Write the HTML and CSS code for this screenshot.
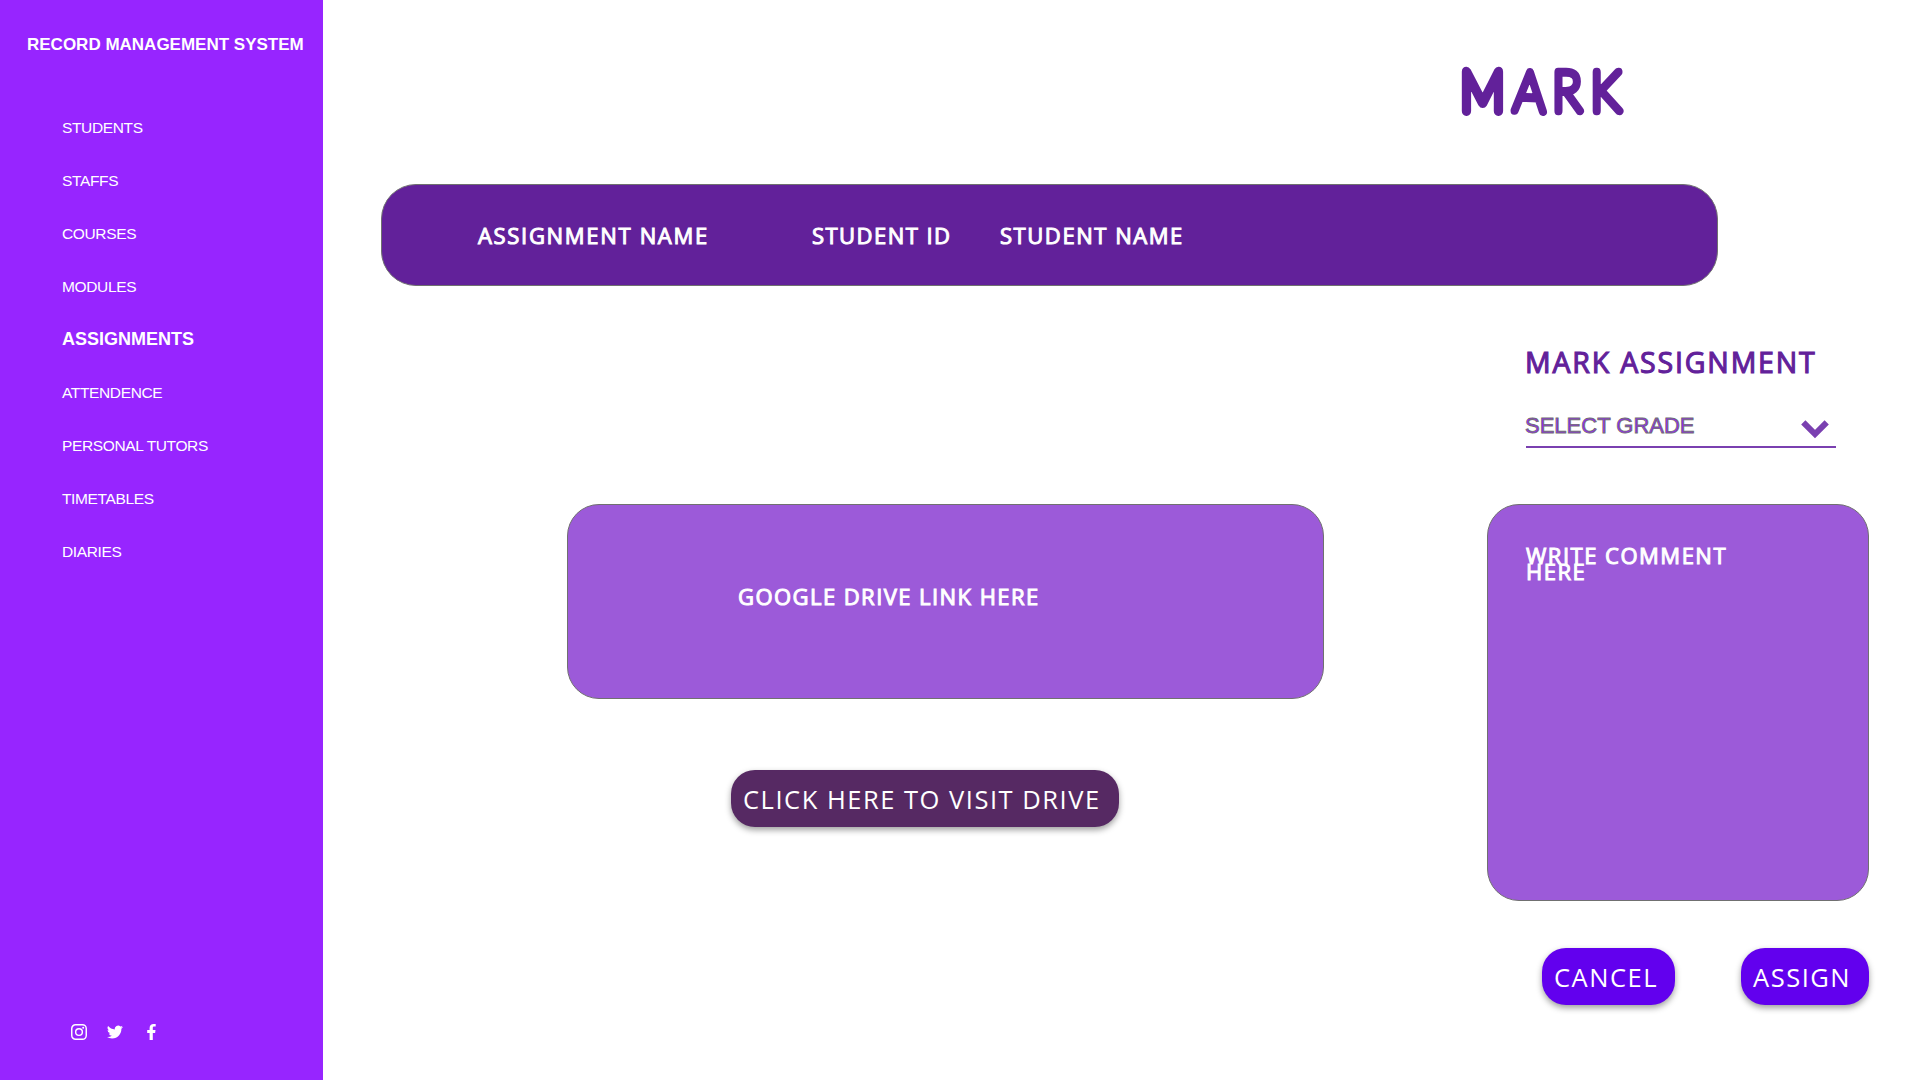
FILE: index.html
```html
<!DOCTYPE html>
<html lang="en">
<head>
<meta charset="utf-8">
<title>Record Management System</title>
<link rel="stylesheet" href="styles.css">
</head>
<body>
<div class="app">
  <aside class="sidebar">
    <h2 class="brand">RECORD MANAGEMENT SYSTEM</h2>
    <nav class="nav">
      <a>STUDENTS</a>
      <a>STAFFS</a>
      <a>COURSES</a>
      <a>MODULES</a>
      <a class="active">ASSIGNMENTS</a>
      <a>ATTENDENCE</a>
      <a>PERSONAL TUTORS</a>
      <a>TIMETABLES</a>
      <a>DIARIES</a>
    </nav>
    <div class="social">
      <svg width="16" height="16" viewBox="0 0 16 16" fill="none" stroke="#fff" stroke-width="1.45"><rect x=".75" y=".75" width="14.5" height="14.5" rx="3.8"/><circle cx="8" cy="8" r="3.35"/><circle cx="12.2" cy="3.8" r="1" fill="#fff" stroke="none"/></svg>
      <svg width="16" height="16" viewBox="0 0 24 24" fill="#fff"><path d="M23.95 4.57a10 10 0 0 1-2.82.77 4.96 4.96 0 0 0 2.16-2.72c-.95.55-2 .95-3.13 1.18a4.92 4.92 0 0 0-8.38 4.48C7.69 8.1 4.07 6.13 1.64 3.16a4.92 4.92 0 0 0 1.52 6.57 4.9 4.9 0 0 1-2.23-.61v.06a4.92 4.92 0 0 0 3.95 4.83 5 5 0 0 1-2.21.08 4.94 4.94 0 0 0 4.6 3.42A9.87 9.87 0 0 1 0 19.54a13.99 13.99 0 0 0 7.55 2.21c9.05 0 14-7.5 14-13.98 0-.21 0-.42-.02-.63a9.94 9.94 0 0 0 2.42-2.57z"/></svg>
      <svg class="facebook" width="9" height="16" viewBox="0 0 9 16" fill="#fff"><path d="M2.6 16V9H.2V6.1h2.4V4C2.600 1.400 4.200 0 6.600 0L8.700.1v2.500H7.200C6 2.600 5.800 3.200 5.800 4v2.100h2.700L8.100 9H5.800v7z"/></svg>
    </div>
  </aside>

  <main class="main">
    <header class="page-title">
      <svg width="200" height="80" viewBox="0 0 200 80">
        <text class="mark" transform="scale(.88 1)" y="50.500" x="5 65 109.800 153" rotate="0 2 0 0"><tspan class="mark-wide">M</tspan>ARK</text>
      </svg>
    </header>

    <div class="table-head">
      <span class="col-assignment">ASSIGNMENT NAME</span>
      <span class="col-id">STUDENT ID</span>
      <span class="col-name">STUDENT NAME</span>
    </div>

    <div class="content">
      <section class="drive">
        <div class="panel drive-link">GOOGLE DRIVE LINK HERE</div>
        <button class="btn btn-drive">CLICK HERE TO VISIT DRIVE</button>
      </section>

      <section class="grading">
        <h1 class="grading-title">MARK ASSIGNMENT</h1>
        <div class="select">
          <span>SELECT GRADE</span>
          <svg width="28" height="19" viewBox="0 0 28 19"><path d="M2.300 2.300 14 14l11.700-11.700" fill="none" stroke="#7a40b0" stroke-width="6"/></svg>
        </div>
        <div class="panel comment">WRITE COMMENT<br>HERE</div>
        <div class="actions">
          <button class="btn btn-cancel">CANCEL</button>
          <button class="btn btn-assign">ASSIGN</button>
        </div>
      </section>
    </div>
  </main>
</div>
</body>
</html>
```
FILE: styles.css
```css
* { box-sizing: border-box; }

body {
  margin: 0;
  background: #fff;
  font-family: "Open Sans", "Noto Sans", sans-serif;
}

.app {
  display: flex;
  width: 1920px;
  height: 1080px;
  overflow: hidden;
}

/* Sidebar */
.sidebar {
  display: flex;
  flex-direction: column;
  flex: none;
  width: 323px;
  padding: 35px 0 40px 62px;
  background: #9725ff;
  color: #fff;
  font-family: "Liberation Sans", Arial, sans-serif;
}

.brand {
  margin: 0 0 56px -35px;
  font-size: 17px;
  line-height: 20px;
  white-space: nowrap;
}

.nav {
  display: flex;
  flex-direction: column;
  gap: 33px;
  font-size: 15.500px;
  letter-spacing: -.360px;
}

.nav a { height: 20px; line-height: 33px; }
.nav .active { font-size: 18px; font-weight: 700; line-height: 33px; letter-spacing: 0; }

.social {
  display: flex;
  gap: 20px;
  margin: auto 0 0 9px;
}

.facebook { margin-left: 4px; }

/* Main area */
.main {
  flex: 1;
  padding-left: 58px;
}

.page-title {
  height: 184px;
  padding: 60px 0 0 1075px;
}

.page-title svg { overflow: visible; }

.mark {
  font-family: Lato, sans-serif;
  font-size: 55.500px;
  font-weight: 100;
  fill: #62219a;
  stroke: #62219a;
  stroke-width: 8.500px;
  stroke-linejoin: round;
}

.mark-wide {
  font-size: 56px;
  stroke-width: 10px;
}

.table-head {
  display: flex;
  align-items: center;
  width: 1337px;
  height: 102px;
  padding: 0 0 0 96px;
  border: 1px solid #707070;
  border-radius: 35px;
  background: #62219a;
  color: #fff;
  font-size: 22px;
  white-space: nowrap;
  -webkit-text-stroke: 1px #fff;
}

.col-assignment { width: 334px; letter-spacing: 1.680px; }
.col-id { width: 188px; letter-spacing: 1.450px; }
.col-name { letter-spacing: 1.550px; }

.content {
  display: flex;
  gap: 163px;
  padding-left: 186px;
}

.panel {
  border: 1px solid #707070;
  border-radius: 32px;
  background: #9c5ad9;
  color: #fff;
  font-size: 22px;
  -webkit-text-stroke: 1px #fff;
}

.drive {
  width: 757px;
  padding-top: 218px;
}

.drive-link {
  height: 195px;
  padding: 80px 0 0 170px;
  line-height: 22px;
  letter-spacing: 1.440px;
}

.btn {
  height: 57px;
  padding: 0 0 0 12px;
  border: 0;
  border-radius: 24px;
  box-shadow: 0 3px 6px rgba(0, 0, 0, .38);
  color: #fff;
  font-family: inherit;
  font-size: 25.500px;
  letter-spacing: 1.520px;
  text-align: left;
  white-space: nowrap;
}

.btn-drive {
  width: 388px;
  margin: 71px 0 0 164px;
  background: #562963;
}

/* Grading column */
.grading {
  width: 382px;
  padding-top: 61px;
}

.grading-title {
  margin: 0 0 0 38px;
  color: #62219a;
  font-size: 28.500px;
  font-weight: 400;
  line-height: 30px;
  letter-spacing: 1.830px;
  white-space: nowrap;
  -webkit-text-stroke: 1.100px #62219a;
}

.select {
  display: flex;
  justify-content: space-between;
  align-items: flex-start;
  width: 310px;
  height: 33px;
  margin: 38px 0 56px 39px;
  padding-right: 7px;
  border-bottom: 2px solid #7a40b0;
  color: #9725ff;
  font: 22px/22px "Liberation Sans", Arial, sans-serif;
  letter-spacing: 0;
  -webkit-text-stroke: .900px #707070;
}

.select span { margin-left: -1px; }
.select svg { margin-top: 5px; }

.comment {
  height: 397px;
  padding: 42px 0 0 38px;
  line-height: 16px;
  letter-spacing: 1.500px;
}

.actions {
  display: flex;
  justify-content: space-between;
  margin: 47px 0 0 55px;
}

.btn-cancel { width: 133px; background: #6200ee; }
.btn-assign { width: 128px; background: #6200ee; }
```
